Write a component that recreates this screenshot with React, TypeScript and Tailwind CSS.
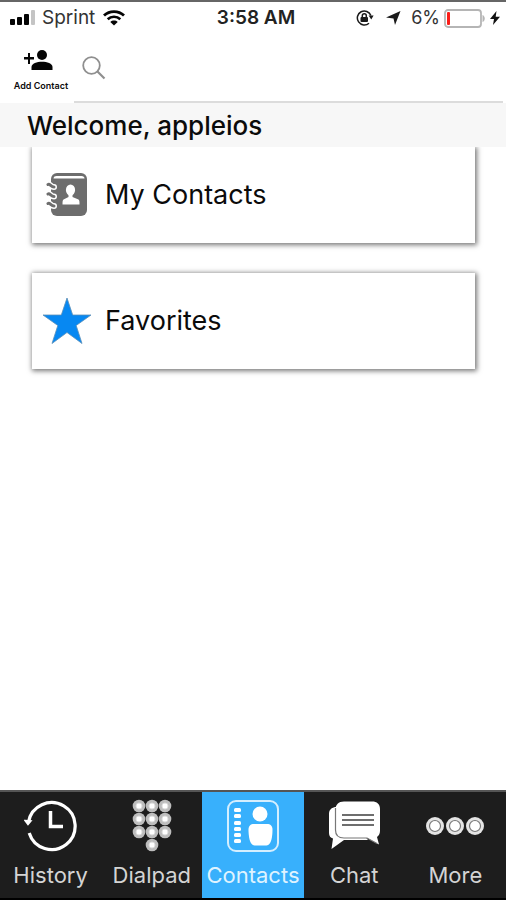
import type { ReactNode } from "react";

function Signal() {
  return (
    <svg width="28" height="16" viewBox="0 0 28 16" aria-hidden="true">
      <rect x="0" y="9" width="5" height="6" rx="1" fill="#050505" />
      <rect x="7" y="7" width="5" height="8" rx="1" fill="#050505" />
      <rect x="14" y="4" width="5" height="11" rx="1" fill="#050505" />
      <rect x="21" y="0" width="4" height="15" rx="1" fill="#c4c4c4" />
    </svg>
  );
}

function Wifi() {
  return (
    <svg width="22" height="16" viewBox="0 0 22 16" fill="none" stroke="#050505" aria-hidden="true">
      <path d="M1 5.600C6.500 .3 15.500 .3 21 5.600" strokeWidth="2.800" />
      <path d="M4.700 9.300c3.500-3.400 9.100-3.400 12.600 0" strokeWidth="2.600" />
      <path d="M11 15.600 7.300 12c2-1.900 5.400-1.900 7.400 0z" fill="#050505" stroke="none" />
    </svg>
  );
}

function RotationLock() {
  return (
    <svg width="18" height="16" viewBox="0 0 18 16" fill="none" stroke="#1a1a1a" aria-hidden="true">
      <path d="M14.900 5.500A7 7 0 1 0 13 13.200" strokeWidth="1.500" />
      <path d="M12.600 5.600h5l-2.300 4z" fill="#1a1a1a" stroke="none" />
      <rect x="4.500" y="7" width="7.500" height="5" rx="1" fill="#1a1a1a" stroke="none" />
      <path d="M6.300 7.500V5.800a2 2 0 0 1 4 0v1.700" strokeWidth="1.500" />
    </svg>
  );
}

function LocationArrow() {
  return (
    <svg width="15" height="14" viewBox="0 0 15 14" fill="#1a1a1a" aria-hidden="true">
      <path d="M14.500 0 9 14 7.500 7.500 0 6.500z" />
    </svg>
  );
}

function Battery() {
  return (
    <svg width="42" height="19" viewBox="0 0 42 19" aria-hidden="true">
      <rect x="1" y="1" width="36" height="17" rx="3" fill="#fff" stroke="#b5b5b5" strokeWidth="1.800" />
      <rect x="3" y="3" width="3" height="13" rx="1" fill="#fb1d18" />
      <path d="M38.500 6c3 1 3 6 0 7z" fill="#b5b5b5" />
    </svg>
  );
}

function Bolt() {
  return (
    <svg width="10" height="14" viewBox="0 0 10 14" fill="#111" aria-hidden="true">
      <path d="M6.500 0 0 8h4l-1 6L10 5.700H5.700z" />
    </svg>
  );
}

function AddPerson() {
  return (
    <svg width="34" height="20" viewBox="0 0 34 20" fill="#050505" aria-hidden="true">
      <circle cx="18" cy="5" r="5" />
      <path d="M7.500 20v-3c0-3.500 5.500-5.300 10.500-5.300S28.500 13.500 28.500 17v3z" />
      <path d="M4 3h2v4h4v2.500H6V14H4V9.500H0V7h4z" />
    </svg>
  );
}

function SearchGlass() {
  return (
    <svg width="24" height="24" viewBox="0 0 24 24" fill="none" stroke="#8f8f8f" aria-hidden="true">
      <circle cx="9.500" cy="9.500" r="8.300" strokeWidth="1.800" />
      <path d="m15.500 15.500 7 7" strokeWidth="2.200" />
    </svg>
  );
}

function AddressBook() {
  return (
    <svg width="42" height="44" viewBox="0 0 42 44" aria-hidden="true">
      <rect x="5" y="0" width="36" height="43" rx="6" fill="#6d6d6d" />
      <path d="M7.500 5.500C7.500 3.800 9 3 10.500 3h25c1.800 0 3 1 3 2.500z" fill="#fff" />
      <g fill="none" stroke="#fff" strokeWidth="6" strokeLinecap="round">
        <path d="M2 11.500c2-1 3 2.500 6 2.500M2 21c2-1 3 2.500 6 2.500M2 30.500c2-1 3 2.500 6 2.500" />
      </g>
      <g fill="none" stroke="#6d6d6d" strokeWidth="3" strokeLinecap="round">
        <path d="M2 11.500c2-1 3 2.500 6 2.500M2 21c2-1 3 2.500 6 2.500M2 30.500c2-1 3 2.500 6 2.500" />
      </g>
      <ellipse cx="24.500" cy="17" rx="4.600" ry="5.500" fill="#fff" />
      <path d="M22.500 20h4v4l6 2.500c1 .8 1 2.500 1 5h-17c0-2.500 0-4.200 1-5l5-2.500z" fill="#fff" />
    </svg>
  );
}

function Star() {
  return (
    <svg width="50" height="48" viewBox="0 0 50 48" aria-hidden="true">
      <path
        d="M25 1 30.700 18H49L34.200 28.500 40 46.500 25 35.500 10 46.500 15.800 28.500 1 18h18.300z"
        fill="#0788f2"
        stroke="#5c8fb8"
        strokeWidth=".8"
      />
    </svg>
  );
}

function HistoryIcon() {
  return (
    <svg width="54" height="54" viewBox="0 0 54 54" fill="none" stroke="#fff" aria-hidden="true">
      <path d="M4.500 23A23.500 23.500 0 1 1 5.200 34" strokeWidth="3.200" />
      <path d="m1 21.500 6 .5-3 3.500z" fill="#fff" strokeWidth="1.500" />
      <path d="M26.500 12v15.500H39" strokeWidth="3.500" />
    </svg>
  );
}

const KEYS = [
  [7, 7], [20, 7], [33, 7],
  [7, 20], [20, 20], [33, 20],
  [7, 33], [20, 33], [33, 33],
  [20, 46],
];

function DialpadIcon() {
  return (
    <svg width="40" height="54" viewBox="0 0 40 54" aria-hidden="true">
      {KEYS.map(([x, y]) => (
        <g key={`${x}-${y}`}>
          <circle cx={x} cy={y} r="6.300" fill="#bdbdbd" />
          <circle cx={x} cy={y} r="3" fill="#fff" stroke="#dedede" strokeWidth="1" />
        </g>
      ))}
    </svg>
  );
}

function ContactsIcon() {
  return (
    <svg width="54" height="54" viewBox="0 0 54 54" aria-hidden="true">
      <rect x="2" y="2" width="50" height="50" rx="8" fill="none" stroke="#d5eefe" strokeWidth="2" />
      <g fill="#fff">
        {[9, 15, 22, 28, 34, 40].map((y) => (
          <rect key={y} x="8" y={y} width="7" height="4" rx="1.500" />
        ))}
        <circle cx="34" cy="15" r="7.500" />
        <path d="M28 25h13c3.500 0 5.500 2 5.500 5.500 0 6-1 16-6 16h-12c-5 0-6-10-6-16C22.500 27 24.500 25 28 25z" />
      </g>
    </svg>
  );
}

function ChatIcon() {
  return (
    <svg width="54" height="54" viewBox="0 0 54 54" aria-hidden="true">
      <path d="M8 8C4 9 2 11 2 15v19c0 3 1.500 5 4 5.500L4.500 50 17 41h24L12 8z" fill="#fff" />
      <path
        d="M17 2.500h28c5 0 8 2.500 8 7.500v22c0 3-1.500 5-3 6l2 7.500L40 39H17c-5.500 0-8.500-3-8.500-8V11c0-5.500 3-8.500 8.500-8.500z"
        fill="#fff"
      />
      <path d="M8.500 9v22c0 5 3 8 8.500 8h23l10 5.500" fill="none" stroke="#777" strokeWidth="1.200" />
      <path d="M15 16h32M15 21h32M15 26h32" stroke="#6e6e6e" strokeWidth="1.800" />
    </svg>
  );
}

function MoreIcon() {
  return (
    <svg width="60" height="54" viewBox="0 0 60 54" aria-hidden="true">
      {[10, 30, 50].map((x) => (
        <g key={x}>
          <circle cx={x} cy="27" r="9" fill="#e4e4e4" />
          <circle cx={x} cy="27" r="5.500" fill="#fff" stroke="#777" strokeWidth="1.200" />
        </g>
      ))}
    </svg>
  );
}

function Card({ icon, label }: { icon: ReactNode; label: string }) {
  return (
    <button
      type="button"
      className="flex h-24 w-full items-center gap-[11px] bg-white pl-2 text-left text-[27px] leading-8 text-[#0b0b0b] shadow-[1px_1px_5px_1px_#777]"
    >
      <span className="flex w-[54px] shrink-0 justify-center">{icon}</span>
      {label}
    </button>
  );
}

const TABS: { label: string; icon: ReactNode; active?: boolean }[] = [
  { label: "History", icon: <HistoryIcon /> },
  { label: "Dialpad", icon: <DialpadIcon /> },
  { label: "Contacts", icon: <ContactsIcon />, active: true },
  { label: "Chat", icon: <ChatIcon /> },
  { label: "More", icon: <MoreIcon /> },
];

export default function App() {
  return (
    <div className="flex min-h-screen flex-col border-t-2 border-[#666] bg-white font-['Inter','Liberation_Sans',sans-serif] text-[#0b0b0b]">
      <div className="grid h-8 grid-cols-[1fr_auto_1fr] items-center pr-1 pl-[10px] text-[19px] leading-6">
        <div className="flex items-center gap-1 text-[#333]">
          <Signal />
          <span>Sprint</span>
          <span className="pl-1">
            <Wifi />
          </span>
        </div>
        <div className="font-semibold text-[#222]">3:58 AM</div>
        <div className="flex items-center justify-end text-lg text-[#333]">
          <RotationLock />
          <span className="pr-[10px] pl-3">
            <LocationArrow />
          </span>
          <span className="pr-1">6%</span>
          <Battery />
          <span className="pr-[2px] pl-1">
            <Bolt />
          </span>
        </div>
      </div>

      <header className="flex h-[69px] pr-[3px]">
        <button type="button" className="flex w-[74px] shrink-0 flex-col items-center gap-[10px] pt-4 pl-2">
          <AddPerson />
          <span className="text-[9px] leading-3 font-semibold whitespace-nowrap">Add Contact</span>
        </button>
        <label className="flex flex-1 items-center gap-2 border-b-2 border-[#dcdcdc] pl-2">
          <SearchGlass />
          <input type="search" aria-label="Search contacts" className="h-10 min-w-0 flex-1 text-xl outline-none" />
        </label>
      </header>

      <h1 className="bg-[#f7f7f7] px-[27px] pt-[7px] pb-[5px] text-[26px] leading-8 font-medium">Welcome, appleios</h1>

      <main className="flex flex-1 flex-col gap-[30px] overflow-hidden pr-[31px] pl-8">
        <Card icon={<AddressBook />} label="My Contacts" />
        <Card icon={<Star />} label="Favorites" />
      </main>

      <nav className="grid h-[110px] grid-cols-5 border-y-2 border-t-[#555] border-b-black bg-[#1d1d1d]">
        {TABS.map((tab) => (
          <button
            key={tab.label}
            type="button"
            aria-current={tab.active ? "page" : undefined}
            className={
              tab.active
                ? "flex flex-col items-center gap-2 bg-[#38b0fc] pt-[7px] text-[22px] leading-7 text-[#dff3ff]"
                : "flex flex-col items-center gap-2 pt-[7px] text-[22px] leading-7 text-[#d4d4d4]"
            }
          >
            {tab.icon}
            {tab.label}
          </button>
        ))}
      </nav>
    </div>
  );
}
